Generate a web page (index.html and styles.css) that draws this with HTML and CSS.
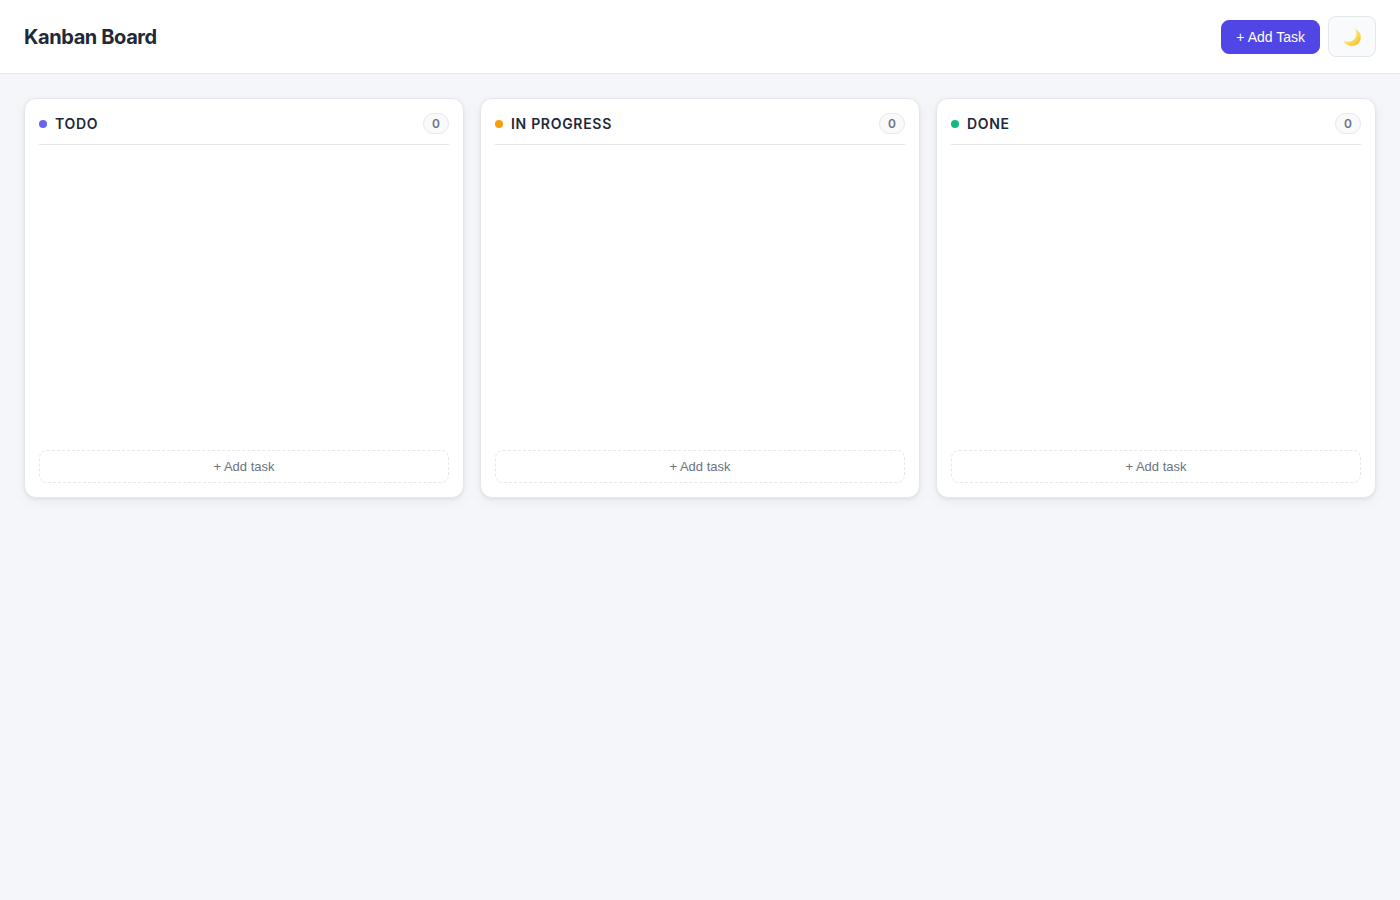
FILE: index.html
```html
<!DOCTYPE html>
<html lang="en">
<head>
    <meta charset="UTF-8">
    <meta name="viewport" content="width=device-width, initial-scale=1.0">
    <title>Kanban Board</title>
    <link rel="stylesheet" href="styles.css">
</head>
<body>

<!-- Header -->
<header class="header">
    <h1>Kanban Board</h1>
    <div class="header-actions">
        <button type="button" class="btn-primary">+ Add Task</button>
        <button type="button" class="theme-toggle" aria-label="Toggle dark mode">
            <svg class="moon" viewBox="0 0 20 20" aria-hidden="true">
                <defs>
                    <linearGradient id="moonFill" x1="0" y1="0" x2="1" y2="1">
                        <stop offset="0.3" stop-color="#fbe58a"/>
                        <stop offset="0.7" stop-color="#fbd444"/>
                        <stop offset="1" stop-color="#e5a82c"/>
                    </linearGradient>
                </defs>
                <path fill="url(#moonFill)" d="M12.6 1.6C16.6 3.4 19 6.8 18.8 10.8C18.5 15.6 14.8 19 10.2 19C6.2 19 2.8 16.8 1.2 13.2C4.6 15.4 9.2 15.4 12.2 12.6C15.2 9.8 15.2 5.2 12.6 1.6Z"/>
            </svg>
        </button>
    </div>
</header>

<!-- Board -->
<main class="board">
    <section class="column">
        <div class="column-header">
            <span class="dot dot-todo"></span>
            <h2>Todo</h2>
            <span class="count">0</span>
        </div>
        <div class="task-list"></div>
        <button type="button" class="add-task">+ Add task</button>
    </section>

    <section class="column">
        <div class="column-header">
            <span class="dot dot-progress"></span>
            <h2>In Progress</h2>
            <span class="count">0</span>
        </div>
        <div class="task-list"></div>
        <button type="button" class="add-task">+ Add task</button>
    </section>

    <section class="column">
        <div class="column-header">
            <span class="dot dot-done"></span>
            <h2>Done</h2>
            <span class="count">0</span>
        </div>
        <div class="task-list"></div>
        <button type="button" class="add-task">+ Add task</button>
    </section>
</main>

</body>
</html>
```
FILE: styles.css
```css
* {
    margin: 0;
    padding: 0;
    box-sizing: border-box;
}

body {
    font-family: Inter, sans-serif;
    background: #f4f6fa;
    color: #1f2937;
    min-height: 100vh;
}

button {
    font-family: "Liberation Sans", Arial, sans-serif;
    cursor: pointer;
}

/* Header */
.header {
    display: flex;
    justify-content: space-between;
    align-items: center;
    padding: 16px 24px;
    background: #fff;
    border-bottom: 1px solid #e5e7eb;
}

.header h1 {
    font-size: 20px;
    font-weight: 700;
    letter-spacing: -0.02em;
}

.header-actions {
    display: flex;
    align-items: center;
    gap: 8px;
}

.btn-primary {
    padding: 8px 14px;
    font-size: 14px;
    font-weight: 500;
    line-height: 16px;
    color: #fff;
    background: #4f46e5;
    border: 1px solid #4f46e5;
    border-radius: 8px;
}

.btn-primary:hover {
    background: #4338ca;
}

.theme-toggle {
    display: flex;
    align-items: center;
    justify-content: center;
    width: 48px;
    height: 41px;
    background: #f9fafb;
    border: 1px solid #e5e7eb;
    border-radius: 8px;
}

.moon {
    width: 20px;
    height: 20px;
}

/* Board */
.board {
    display: grid;
    grid-template-columns: repeat(3, 1fr);
    gap: 16px;
    padding: 24px;
}

.column {
    display: flex;
    flex-direction: column;
    min-height: 400px;
    padding: 14px;
    background: #fff;
    border: 1px solid #e5e7eb;
    border-radius: 12px;
    box-shadow: 0 1px 3px rgba(0, 0, 0, 0.06), 0 4px 12px rgba(0, 0, 0, 0.05);
}

.column-header {
    display: flex;
    align-items: center;
    gap: 8px;
    padding-bottom: 10px;
    border-bottom: 1px solid #e5e7eb;
}

.column-header h2 {
    font-size: 14px;
    font-weight: 600;
    letter-spacing: 0.05em;
    text-transform: uppercase;
}

.dot {
    width: 8px;
    height: 8px;
    border-radius: 50%;
}

.dot-todo {
    background: #6366f1;
}

.dot-progress {
    background: #f59e0b;
}

.dot-done {
    background: #10b981;
}

.count {
    margin-left: auto;
    padding: 2px 8px;
    font-size: 12px;
    font-weight: 600;
    line-height: 15px;
    color: #6b7280;
    background: #f9fafb;
    border: 1px solid #e5e7eb;
    border-radius: 999px;
}

.task-list {
    flex: 1;
}

.add-task {
    padding: 8px;
    font-size: 13px;
    line-height: 15px;
    color: #6b7280;
    background: transparent;
    border: 1px dashed #e5e7eb;
    border-radius: 8px;
}

.add-task:hover {
    color: #4f46e5;
    border-color: #4f46e5;
}

/* Mobile */
@media (max-width: 768px) {
    .board {
        grid-template-columns: 1fr;
    }
}
```
